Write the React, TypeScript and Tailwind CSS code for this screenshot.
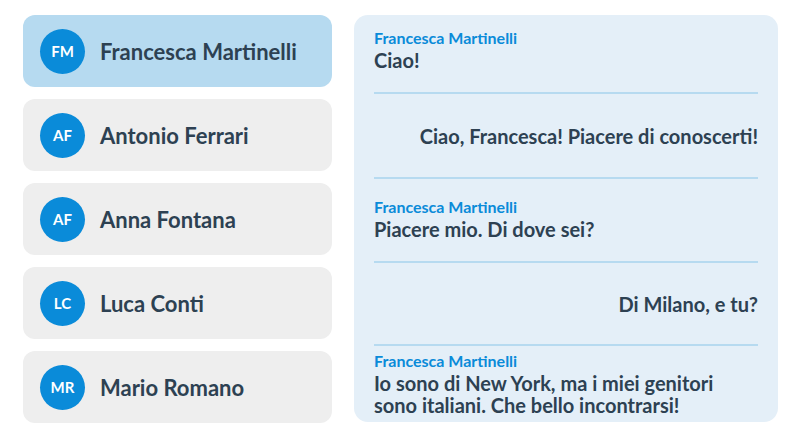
const contacts = [
  { initials: "FM", name: "Francesca Martinelli", active: true },
  { initials: "AF", name: "Antonio Ferrari" },
  { initials: "AF", name: "Anna Fontana" },
  { initials: "LC", name: "Luca Conti" },
  { initials: "MR", name: "Mario Romano" },
];

type Message = { from?: string; text: string; mine?: boolean; h: string };

const messages: Message[] = [
  { from: "Francesca Martinelli", text: "Ciao!", h: "h-[77px] pb-[9px]" },
  { text: "Ciao, Francesca! Piacere di conoscerti!", mine: true, h: "h-[85px]" },
  { from: "Francesca Martinelli", text: "Piacere mio. Di dove sei?", h: "h-[84px] pb-[4px]" },
  { text: "Di Milano, e tu?", mine: true, h: "h-[83px]" },
  {
    from: "Francesca Martinelli",
    text: "Io sono di New York, ma i miei genitori sono italiani. Che bello incontrarsi!",
    h: "flex-1 pb-[2px]",
  },
];

function ContactCard({ initials, name, active }: { initials: string; name: string; active?: boolean }) {
  return (
    <div
      className={`flex h-[72px] items-center gap-[15px] rounded-xl px-[17px] ${
        active ? "bg-[#b6daf0]" : "bg-[#eeeeee]"
      }`}
    >
      <div className="flex h-[45px] w-[45px] shrink-0 items-center justify-center rounded-full bg-[#0a8bd9] text-[15px] font-bold text-white">
        {initials}
      </div>
      <span className="text-[22px] font-bold text-[#2d4152]">{name}</span>
    </div>
  );
}

export default function App() {
  return (
    <div className="flex h-[437px] w-[800px] gap-[22px] bg-white pl-[23px] pr-[22px] pt-[15px] font-['Lato',sans-serif]">
      <div className="flex w-[309px] flex-col gap-3">
        {contacts.map((c) => (
          <ContactCard key={c.name} {...c} />
        ))}
      </div>
      <div className="flex h-[407px] flex-1 flex-col rounded-[14px] bg-[#e4eff8] px-5">
        {messages.map((m, i) => (
          <div key={i} className={`flex flex-col ${m.h}`}>
            {i > 0 ? <div className="h-[2px] shrink-0 bg-[#b6daf0]" /> : null}
            <div className={`flex flex-1 flex-col justify-center ${m.mine ? "items-end text-right" : "items-start"}`}>
              {m.from ? (
                <span className="text-[16px] font-bold leading-[22px] text-[#0a8bd9]">{m.from}</span>
              ) : null}
              <p className="max-w-[370px] text-[20px] font-bold leading-[22px] text-[#2d4152]">{m.text}</p>
            </div>
          </div>
        ))}
      </div>
    </div>
  );
}
